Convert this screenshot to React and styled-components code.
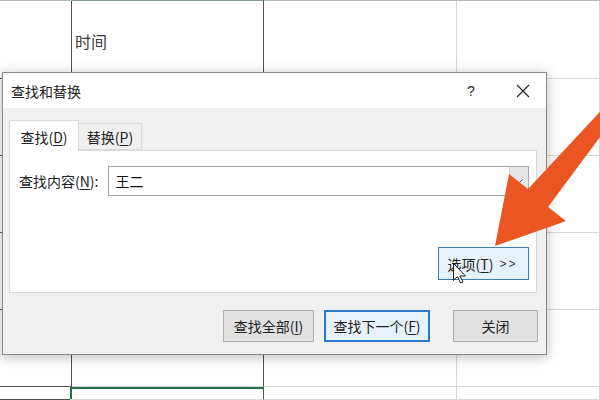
import React from "react";
import styled, { createGlobalStyle } from "styled-components";

const Global = createGlobalStyle`
  html, body { margin: 0; padding: 0; background: #fff; }
  body {
    width: 600px; height: 400px; overflow: hidden;
    font-family: "Noto Sans CJK SC", "Microsoft YaHei", "Noto Sans", sans-serif;
  }
`;

const Page = styled.div`
  position: relative;
  width: 600px;
  height: 400px;
  overflow: hidden;
  background: #fff;
`;

const Sheet = styled.div`
  display: grid;
  grid-template-columns: 72px 192px 193px 1fr;
  grid-template-rows: 78px 77px 77px 77px 77px 1fr;
  width: 600px;
  height: 400px;
  box-sizing: border-box;
  border-top: 1px solid #b8b8b8;
`;

const Cell = styled.div`
  box-sizing: border-box;
  border-right: 1px solid ${(p) => (p.$dark ? "#505050" : "#d6d6d6")};
  border-bottom: 1px solid ${(p) => (p.$darkBottom ? "#505050" : "#d6d6d6")};
  display: flex;
  align-items: center;
  padding: 2px 0 0 3px;
  font-size: 16px;
  color: #3a3a3a;
  ${(p) => p.$topTint && "border-top: 1px solid #7d9c8b; margin-top: -1px;"}
  ${(p) =>
    p.$selected &&
    "box-shadow: inset 0 2px 0 #217346, inset 2px 0 0 #217346; margin-left: -2px; border-top: 0;"}
`;

const Dialog = styled.div`
  position: absolute;
  left: 2px;
  top: 72px;
  width: 545px;
  height: 283px;
  box-sizing: border-box;
  border: 1px solid #8a8a8a;
  background: #f0f0f0;
  box-shadow: 0 2px 12px rgba(0, 0, 0, 0.28);
  display: flex;
  flex-direction: column;
`;

const TitleBar = styled.div`
  height: 35px;
  flex: none;
  background: #fff;
  display: flex;
  align-items: center;
  padding-left: 8px;
  font-size: 14px;
  color: #222;
`;

const Title = styled.div`
  flex: 1;
`;

const HelpBtn = styled.div`
  width: 30px;
  text-align: center;
  font-size: 14px;
  font-family: "Liberation Sans", sans-serif;
  color: #222;
  margin-right: 14px;
`;

const CloseBtn = styled.div`
  width: 46px;
  height: 35px;
  display: flex;
  align-items: center;
  justify-content: center;
`;

const Body = styled.div`
  flex: 1;
  display: flex;
  flex-direction: column;
  padding: 12px 9px 12px 6px;
  min-height: 0;
`;

const Tabs = styled.div`
  display: flex;
  align-items: flex-end;
  height: 30px;
  position: relative;
  z-index: 1;
`;

const Tab = styled.div`
  box-sizing: border-box;
  height: ${(p) => (p.$active ? "31px" : "27px")};
  width: ${(p) => (p.$active ? "70px" : "63px")};
  margin-bottom: ${(p) => (p.$active ? "-1px" : "0")};
  background: ${(p) => (p.$active ? "#fff" : "#f0f0f0")};
  border: 1px solid #d9d9d9;
  border-bottom: ${(p) => (p.$active ? "0" : "1px solid #d9d9d9")};
  ${(p) => !p.$active && "border-left: 0;"}
  display: flex;
  align-items: center;
  justify-content: center;
  font-size: 14px;
  color: #222;
  padding-top: ${(p) => (p.$active ? "2px" : "0")};
`;

const Panel = styled.div`
  height: 143px;
  box-sizing: border-box;
  background: #fff;
  border: 1px solid #d9d9d9;
  display: flex;
  flex-direction: column;
  padding: 15px 7px 12px 9px;
`;

const FieldRow = styled.div`
  display: flex;
  align-items: center;
  gap: 10px;
  height: 30px;
`;

const Label = styled.div`
  font-size: 14px;
  color: #222;
  white-space: nowrap;
`;

const Combo = styled.div`
  flex: 1;
  height: 30px;
  box-sizing: border-box;
  border: 1px solid #a6a6a6;
  background: #fff;
  display: flex;
  align-items: stretch;
`;

const ComboText = styled.div`
  flex: 1;
  display: flex;
  align-items: center;
  padding-left: 6px;
  font-size: 14px;
  color: #111;
`;

const ComboArrow = styled.div`
  width: 18px;
  background: #e6e6e6;
  border-left: 1px solid #cfcfcf;
  display: flex;
  align-items: center;
  justify-content: center;
`;

const Button = styled.div`
  box-sizing: border-box;
  height: ${(p) => p.$h || 32}px;
  width: ${(p) => p.$w}px;
  margin-right: ${(p) => p.$mr || 0}px;
  display: flex;
  align-items: center;
  justify-content: center;
  font-size: 14px;
  color: #222;
  background: ${(p) => (p.$focus || p.$hover ? "#e5f1fb" : "#e1e1e1")};
  border: ${(p) =>
    p.$focus ? "2px solid #2b78c8" : p.$hover ? "1px solid #3c7fb1" : "1px solid #adadad"};
  white-space: nowrap;
`;

const OptionsButton = styled(Button)`
  margin-top: auto;
  align-self: flex-end;
  gap: 6px;
  padding-right: 2px;
`;

const Chevrons = styled.span`
  font-family: "Liberation Sans", sans-serif;
  font-size: 12px;
  letter-spacing: 2px;
  color: #333;
`;

const Footer = styled.div`
  display: flex;
  justify-content: flex-end;
  align-items: center;
  margin-top: 17px;
  margin-right: -1px;
  gap: 10px;
`;

const Overlay = styled.svg`
  position: absolute;
  left: 0;
  top: 0;
  width: 600px;
  height: 400px;
  pointer-events: none;
`;

const Key = styled.u`
  text-decoration: underline;
  text-underline-offset: 2px;
`;

const cells = [];
const rows = 6;
for (let r = 0; r < rows; r++) {
  for (let c = 0; c < 4; c++) {
    cells.push({ r, c });
  }
}

export default function App() {
  return (
    <Page>
      <Global />
      <Sheet>
        {cells.map(({ r, c }) => (
          <Cell
            key={`${r}-${c}`}
            $dark={c === 0 || c === 1}
            $darkBottom={c === 0}
            $topTint={r === 0 && c === 1}
            $selected={r === 5 && c === 1}
          >
            {r === 0 && c === 1 ? "时间" : null}
          </Cell>
        ))}
      </Sheet>

      <Dialog>
        <TitleBar>
          <Title>查找和替换</Title>
          <HelpBtn>?</HelpBtn>
          <CloseBtn>
            <svg width="14" height="14" viewBox="0 0 14 14">
              <path d="M1 1 L13 13 M13 1 L1 13" stroke="#222" strokeWidth="1.1" fill="none" />
            </svg>
          </CloseBtn>
        </TitleBar>
        <Body>
          <Tabs>
            <Tab $active>
              查找(<Key>D</Key>)
            </Tab>
            <Tab>
              替换(<Key>P</Key>)
            </Tab>
          </Tabs>
          <Panel>
            <FieldRow>
              <Label>
                查找内容(<Key>N</Key>):
              </Label>
              <Combo>
                <ComboText>王二</ComboText>
                <ComboArrow>
                  <svg width="8" height="5" viewBox="0 0 8 5">
                    <path d="M0.5 0.5 L4 4 L7.5 0.5" stroke="#555" fill="none" strokeWidth="1" />
                  </svg>
                </ComboArrow>
              </Combo>
            </FieldRow>
            <OptionsButton $w={91} $h={33} $hover>
              <span>
                选项(<Key>T</Key>)
              </span>
              <Chevrons>&gt;&gt;</Chevrons>
            </OptionsButton>
          </Panel>
          <Footer>
            <Button $w={91}>
              查找全部(<Key>I</Key>)
            </Button>
            <Button $w={106} $focus $mr={13}>
              查找下一个(<Key>F</Key>)
            </Button>
            <Button $w={85}>关闭</Button>
          </Footer>
        </Body>
      </Dialog>

      <Overlay viewBox="0 0 600 400">
        <polygon
          points="495,246 509,174 528,189 612,99 614,118 548,207 566,221"
          fill="#ea5522"
        />
        <g transform="translate(453.5,263.5)">
          <path
            d="M0 0 L0 17 L4 13 L7 19.5 L9.5 18.5 L6.5 12.5 L12 12.5 Z"
            fill="#fff"
            stroke="#222"
            strokeWidth="1"
            strokeLinejoin="round"
          />
        </g>
      </Overlay>
    </Page>
  );
}
